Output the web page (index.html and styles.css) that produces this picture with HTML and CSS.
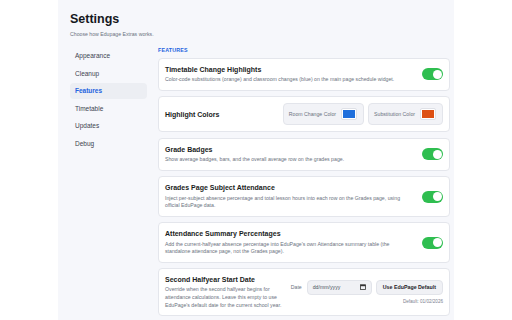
FILE: index.html
```html
<!DOCTYPE html>
<html>
<head>
<meta charset="utf-8">
<link rel="stylesheet" href="styles.css">
</head>
<body>
<div class="panel">
  <h1 class="title">Settings</h1>
  <p class="subtitle">Choose how Edupage Extras works.</p>
  <div class="layout">
    <nav class="sidebar">
      <div class="nav-item">Appearance</div>
      <div class="nav-item">Cleanup</div>
      <div class="nav-item active">Features</div>
      <div class="nav-item">Timetable</div>
      <div class="nav-item">Updates</div>
      <div class="nav-item">Debug</div>
    </nav>
    <main class="content">
      <div class="section-label">FEATURES</div>
      <div class="cards">
        <div class="card">
          <div class="card-text">
            <div class="card-title">Timetable Change Highlights</div>
            <div class="card-desc">Color-code substitutions (orange) and classroom changes (blue) on the main page schedule widget.</div>
          </div>
          <div class="toggle"><span class="knob"></span></div>
        </div>
        <div class="card card-center">
          <div class="card-text">
            <div class="card-title">Highlight Colors</div>
          </div>
          <div class="color-group">
            <div class="color-box">
              <span class="color-label">Room Change Color</span>
              <span class="swatch"><span class="swatch-fill blue"></span></span>
            </div>
            <div class="color-box">
              <span class="color-label">Substitution Color</span>
              <span class="swatch"><span class="swatch-fill orange"></span></span>
            </div>
          </div>
        </div>
        <div class="card">
          <div class="card-text">
            <div class="card-title">Grade Badges</div>
            <div class="card-desc">Show average badges, bars, and the overall average row on the grades page.</div>
          </div>
          <div class="toggle"><span class="knob"></span></div>
        </div>
        <div class="card">
          <div class="card-text">
            <div class="card-title">Grades Page Subject Attendance</div>
            <div class="card-desc">Inject per-subject absence percentage and total lesson hours into each row on the Grades page, using official EduPage data.</div>
          </div>
          <div class="toggle"><span class="knob"></span></div>
        </div>
        <div class="card">
          <div class="card-text">
            <div class="card-title">Attendance Summary Percentages</div>
            <div class="card-desc">Add the current-halfyear absence percentage into EduPage's own Attendance summary table (the standalone attendance page, not the Grades page).</div>
          </div>
          <div class="toggle"><span class="knob"></span></div>
        </div>
        <div class="card">
          <div class="card-text narrow">
            <div class="card-title">Second Halfyear Start Date</div>
            <div class="card-desc">Override when the second halfyear begins for attendance calculations. Leave this empty to use EduPage's default date for the current school year.</div>
          </div>
          <div class="date-col">
            <div class="date-row">
              <span class="date-label">Date</span>
              <div class="date-input">
                <span>dd/mm/yyyy</span>
                <svg class="cal" width="6" height="6" viewBox="0 0 6 6"><rect x="0.5" y="0.8" width="5" height="4.7" fill="none" stroke="#333" stroke-width="0.8"/><rect x="0.5" y="0.8" width="5" height="1.4" fill="#333"/></svg>
              </div>
              <div class="btn">Use EduPage Default</div>
            </div>
            <div class="default-note">Default: 01/02/2026</div>
          </div>
        </div>
      </div>
    </main>
  </div>
</div>
</body>
</html>
```

FILE: styles.css
```css
* { box-sizing: border-box; }
html, body { margin: 0; padding: 0; }
body {
  background: #ffffff;
  font-family: "Liberation Sans", Arial, sans-serif;
  color: #1f2329;
  width: 512px;
  height: 320px;
  overflow: hidden;
}
.panel {
  margin-left: 58px;
  width: 396px;
  height: 320px;
  background: #f6f7fb;
  padding: 12px 4px 0 12px;
}
.title {
  margin: 0;
  font-size: 12.5px;
  line-height: 14px;
  font-weight: 700;
  color: #15181d;
}
.subtitle {
  margin: 5px 0 0 0;
  font-size: 5.2px;
  line-height: 7px;
  color: #6b7280;
}
.layout {
  display: flex;
  gap: 11px;
  margin-top: 9px;
}
.sidebar {
  width: 77px;
  flex: none;
  display: flex;
  flex-direction: column;
  gap: 1.6px;
  padding-top: 1px;
}
.nav-item {
  height: 16px;
  line-height: 16px;
  padding-left: 5px;
  font-size: 6.5px;
  color: #3d4350;
  border-radius: 4px;
}
.nav-item.active {
  background: #eceef3;
  color: #2463e0;
  font-weight: 700;
}
.content {
  width: 292px;
  flex: none;
}
.section-label {
  font-size: 5.3px;
  line-height: 7px;
  font-weight: 700;
  color: #2463e0;
  letter-spacing: 0.2px;
  margin-bottom: 4px;
}
.cards {
  display: flex;
  flex-direction: column;
  gap: 5.6px;
}
.card {
  background: #ffffff;
  border: 1px solid #e4e6ec;
  border-radius: 4px;
  padding: 6px;
  display: flex;
  align-items: center;
  justify-content: space-between;
}
.card-text {
  flex: 1;
  min-width: 0;
}
.card-text.narrow {
  flex: none;
  width: 124px;
}
.card-title {
  font-size: 7px;
  line-height: 9px;
  font-weight: 700;
  color: #1a1d22;
}
.card-desc {
  margin-top: 2.2px;
  font-size: 5.2px;
  line-height: 7.6px;
  color: #6b7280;
  max-width: 240px;
}
.toggle {
  flex: none;
  width: 21px;
  height: 12px;
  border-radius: 6px;
  background: #2fbe50;
  position: relative;
  margin-left: 8px;
}
.knob {
  position: absolute;
  right: 1.5px;
  top: 1.5px;
  width: 9px;
  height: 9px;
  border-radius: 50%;
  background: #ffffff;
}
.color-group {
  display: flex;
  gap: 4px;
}
.color-box {
  height: 22px;
  display: flex;
  align-items: center;
  gap: 5px;
  padding: 0 6px 0 5px;
  background: #f2f3f7;
  border: 1px solid #e3e5eb;
  border-radius: 4px;
}
.color-label {
  font-size: 5.2px;
  color: #6b7280;
}
.swatch {
  width: 16px;
  height: 12px;
  border: 1px solid #dfe1e7;
  border-radius: 2px;
  background: #ffffff;
  display: flex;
  align-items: center;
  justify-content: center;
}
.swatch-fill {
  width: 12px;
  height: 8px;
  display: block;
}
.swatch-fill.blue { background: #1f6fdc; }
.swatch-fill.orange { background: #dd4f12; }
.date-col {
  display: flex;
  flex-direction: column;
  align-items: flex-end;
  gap: 4px;
}
.date-row {
  display: flex;
  align-items: center;
}
.date-label {
  font-size: 5.2px;
  color: #6b7280;
  margin-right: 5px;
}
.date-input {
  width: 65px;
  height: 15px;
  background: #f0f1f5;
  border: 1px solid #e2e4ea;
  border-radius: 4px;
  display: flex;
  align-items: center;
  justify-content: space-between;
  padding: 0 5px 0 5px;
  font-size: 5.2px;
  color: #4b5160;
  margin-right: 4px;
}
.cal { display: block; }
.btn {
  height: 15px;
  line-height: 13px;
  padding: 0 6px;
  background: #f0f1f5;
  border: 1px solid #e2e4ea;
  border-radius: 4px;
  font-size: 5.3px;
  font-weight: 700;
  color: #1f2329;
}
.default-note {
  font-size: 4.6px;
  line-height: 6px;
  color: #7b8190;
}
```
